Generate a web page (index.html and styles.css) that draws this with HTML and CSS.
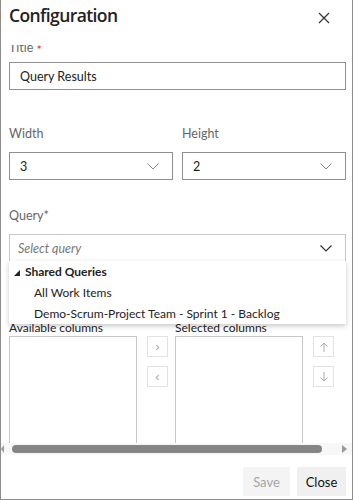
FILE: index.html
```html
<!DOCTYPE html>
<html lang="en">
<head>
    <meta charset="UTF-8">
    <meta name="viewport" content="width=device-width, initial-scale=1.0">
    <title>Configuration</title>
    <link rel="stylesheet" href="styles.css">
</head>
<body>

<div class="dialog">
    <div class="dialog-header">
        <h1 class="dialog-title">Configuration</h1>
        <button class="close-x" aria-label="Close">
            <svg width="12" height="12" viewBox="0 0 12 12"><path d="M1 1 L11 11 M11 1 L1 11" stroke="#333" stroke-width="1.2" fill="none"/></svg>
        </button>
    </div>

    <div class="dialog-body">
        <div class="body-content">
            <label class="field-label title-label">Title <span class="required">*</span></label>
            <div class="text-input">Query Results</div>

            <div class="size-row">
                <div class="size-field">
                    <label class="field-label">Width</label>
                    <div class="select">
                        <span>3</span>
                        <svg class="chevron" width="12" height="7" viewBox="0 0 12 7"><path d="M0.5 0.5 L6 6 L11.5 0.5" stroke="#888" stroke-width="1" fill="none"/></svg>
                    </div>
                </div>
                <div class="size-field">
                    <label class="field-label">Height</label>
                    <div class="select">
                        <span>2</span>
                        <svg class="chevron" width="12" height="7" viewBox="0 0 12 7"><path d="M0.5 0.5 L6 6 L11.5 0.5" stroke="#888" stroke-width="1" fill="none"/></svg>
                    </div>
                </div>
            </div>

            <label class="field-label query-label">Query*</label>
            <div class="query-wrap">
                <div class="select query-select">
                    <span class="placeholder">Select query</span>
                    <svg class="chevron" width="12" height="7" viewBox="0 0 12 7"><path d="M0.5 0.5 L6 6 L11.5 0.5" stroke="#333" stroke-width="1.2" fill="none"/></svg>
                </div>
                <div class="query-menu">
                    <div class="menu-item folder">
                        <svg width="6" height="6" viewBox="0 0 6 6"><path d="M6 0 L6 6 L0 6 Z" fill="#222"/></svg>
                        Shared Queries
                    </div>
                    <div class="menu-item child">All Work Items</div>
                    <div class="menu-item child">Demo-Scrum-Project Team - Sprint 1 - Backlog</div>
                </div>
            </div>

            <div class="columns-row">
                <div class="column-group">
                    <label class="column-label">Available columns</label>
                    <div class="column-list"></div>
                </div>
                <div class="move-buttons">
                    <button class="small-btn">&#8250;</button>
                    <button class="small-btn">&#8249;</button>
                </div>
                <div class="column-group">
                    <label class="column-label">Selected columns</label>
                    <div class="column-list"></div>
                </div>
                <div class="move-buttons">
                    <button class="small-btn">
                        <svg width="8" height="10" viewBox="0 0 8 10"><path d="M4 10 V1 M0.5 4.5 L4 1 L7.5 4.5" stroke="#aaa" stroke-width="1" fill="none"/></svg>
                    </button>
                    <button class="small-btn">
                        <svg width="8" height="10" viewBox="0 0 8 10"><path d="M4 0 V9 M0.5 5.5 L4 9 L7.5 5.5" stroke="#aaa" stroke-width="1" fill="none"/></svg>
                    </button>
                </div>
            </div>
        </div>

        <div class="hscroll">
            <span class="arrow-left"></span>
            <div class="thumb"></div>
            <span class="arrow-right"></span>
        </div>
    </div>

    <div class="dialog-footer">
        <button class="footer-btn disabled">Save</button>
        <button class="footer-btn">Close</button>
    </div>
</div>

</body>
</html>
```

FILE: styles.css
```css
* {
    box-sizing: border-box;
}

body {
    margin: 0;
    font-family: Lato, "Open Sans", sans-serif;
    color: #222;
}

.dialog {
    width: 353px;
    height: 500px;
    border: 1px solid #8c8c8c;
    border-top: none;
    display: flex;
    flex-direction: column;
    background-color: #fff;
}

.dialog-header {
    height: 45px;
    display: flex;
    justify-content: space-between;
    align-items: flex-start;
    padding: 0 22px 0 8px;
}

.dialog-title {
    margin: 2px 0 0 0;
    font-family: "Open Sans", sans-serif;
    font-size: 17.5px;
    font-weight: 600;
    line-height: 26px;
    letter-spacing: -0.6px;
}

.close-x {
    margin-top: 12px;
    padding: 0;
    border: none;
    background: none;
    width: 12px;
    height: 12px;
}

.dialog-body {
    flex: 1;
    overflow: hidden;
    display: flex;
    flex-direction: column;
}

.body-content {
    flex: 1;
    padding: 0 6px 0 8px;
    overflow: hidden;
}

.field-label {
    display: block;
    font-size: 12.5px;
    line-height: 18px;
    color: #666;
}

.title-label {
    height: 18px;
    margin-top: -6px;
}

.required {
    color: #d13438;
    line-height: 1;
    vertical-align: -3px;
}

.text-input,
.select {
    height: 28px;
    border: 1px solid #8f8f8f;
    font-size: 12.5px;
    color: #222;
    display: flex;
    align-items: center;
    padding: 0 10px;
}

.text-input {
    margin-top: 5px;
}

.size-row {
    display: flex;
    gap: 9px;
    margin-top: 35px;
}

.size-field {
    flex: 1;
}

.size-field .select {
    margin-top: 9px;
}

.select {
    justify-content: space-between;
}

.chevron {
    margin-right: 3px;
}

.query-label {
    margin-top: 27px;
}

.query-wrap {
    position: relative;
    margin-top: 9px;
}

.query-select {
    border-color: #c6c6c6;
    padding-left: 8px;
}

.placeholder {
    font-style: italic;
    color: #777;
}

.query-menu {
    position: absolute;
    top: 27px;
    left: 0;
    right: 0;
    z-index: 2;
    background-color: #fff;
    box-shadow: 0 2px 5px rgba(0, 0, 0, 0.22);
}

.menu-item {
    height: 21px;
    line-height: 21px;
    font-size: 12px;
    white-space: nowrap;
}

.folder {
    font-weight: 700;
    padding-left: 5px;
}

.folder svg {
    margin-right: 2px;
    vertical-align: 0;
}

.child {
    padding-left: 25px;
}

.columns-row {
    display: flex;
    margin-top: 60px;
}

.column-group {
    width: 128px;
}

.column-label {
    display: block;
    font-size: 12px;
    line-height: 12px;
    color: #222;
}

.column-list {
    height: 120px;
    margin-top: 2px;
    border: 1px solid #c8c8c8;
    border-bottom: none;
}

.move-buttons {
    width: 38px;
    padding: 14px 0 0 10px;
    display: flex;
    flex-direction: column;
    gap: 9px;
}

.small-btn {
    width: 21px;
    height: 21px;
    padding: 0;
    border: 1px solid #e2e2e2;
    background-color: #fff;
    color: #aaa;
    font-size: 13px;
    line-height: 18px;
    display: flex;
    align-items: center;
    justify-content: center;
}

.hscroll {
    height: 12px;
    margin-bottom: 12px;
    display: flex;
    align-items: center;
    background-color: #f7f7f7;
}

.arrow-left {
    width: 0;
    height: 0;
    border-top: 4px solid transparent;
    border-bottom: 4px solid transparent;
    border-right: 3px solid #999;
}

.thumb {
    flex: 1;
    height: 8px;
    margin: 0 20px 0 8px;
    background-color: #858585;
    border-radius: 4px;
}

.arrow-right {
    width: 0;
    height: 0;
    border-top: 4px solid transparent;
    border-bottom: 4px solid transparent;
    border-left: 5px solid #999;
    margin-right: 5px;
}

.dialog-footer {
    display: flex;
    justify-content: flex-end;
    gap: 7px;
    padding: 0 6px 3px 0;
}

.footer-btn {
    width: 49px;
    height: 29px;
    padding: 0;
    border: none;
    background-color: #f0f0f0;
    font-family: Lato, "Open Sans", sans-serif;
    font-size: 13px;
    color: #111;
}

.footer-btn.disabled {
    background-color: #f4f4f4;
    color: #a6a6a6;
    width: 47px;
}
```
